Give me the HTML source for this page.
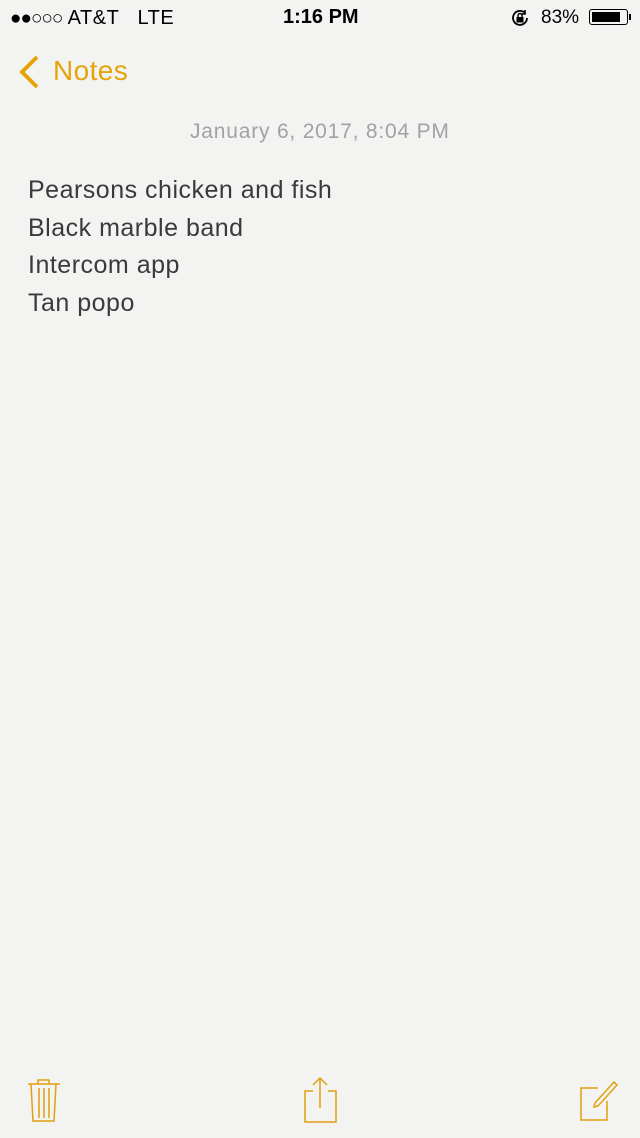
<!DOCTYPE html>
<html><head><meta charset="utf-8"><style>
html,body{margin:0;padding:0}
body{width:640px;height:1138px;background:#f3f3f2;position:relative;overflow:hidden;font-family:"Liberation Sans",Helvetica,Arial,sans-serif}
.a{position:absolute;white-space:nowrap}
</style></head><body>
<div class="a" style="left:10px;top:7px;font-size:19px;color:#000;">
<span style="letter-spacing:-1px">●●○○○</span> <span style="font-size:20px;letter-spacing:0.5px">AT&amp;T&nbsp;&nbsp; LTE</span></div>
<div class="a" style="left:283px;top:6px;font-size:20px;font-weight:bold;color:#000;">1:16 PM</div>
<svg class="a" style="left:510px;top:8px" width="20" height="20" viewBox="0 0 20 20"><path d="M17 10a7 7 0 1 1-2-5" fill="none" stroke="#000" stroke-width="1.8"/><path d="M15 2v4h-4" fill="none" stroke="#000" stroke-width="1.6"/><rect x="6.5" y="9" width="7" height="5.5" fill="#000"/><path d="M8 9V7.5a2 2 0 0 1 4 0V9" fill="none" stroke="#000" stroke-width="1.4"/></svg>
<div class="a" style="left:541px;top:7px;font-size:19px;color:#000;">83%</div>
<div class="a" style="left:589px;top:9px;width:39px;height:16px;border:1.5px solid #000;border-radius:3px;box-sizing:border-box;padding:2px"><div style="width:28px;height:100%;background:#000"></div></div>
<div class="a" style="left:629px;top:14px;width:2px;height:6px;background:#000"></div>
<svg class="a" style="left:16px;top:54px" width="26" height="36" viewBox="0 0 26 36"><path d="M21 3L6 18l15 15" fill="none" stroke="#e5a50a" stroke-width="4"/></svg>
<div class="a" style="left:53px;top:55px;font-size:28px;letter-spacing:0.4px;color:#e5a50a;">Notes</div>
<div class="a" style="left:190px;top:120px;font-size:21px;letter-spacing:0.8px;color:#a2a2a2;">January 6, 2017, 8:04 PM</div>
<div class="a" style="left:28px;top:172px;font-size:25px;letter-spacing:0.5px;line-height:37.7px;color:#3a3a3a;white-space:normal">Pearsons chicken and fish<br>Black marble band<br>Intercom app<br>Tan popo</div>
<svg class="a" style="left:26px;top:1078px" width="36" height="46" viewBox="0 0 36 46" fill="none" stroke="#e0a010" stroke-width="1.5"><path d="M2 6h32M12 6V2h11v4M5 6l2 37h21l2-37M13 10v30M18 10v30M23 10v30"/></svg>
<svg class="a" style="left:302px;top:1076px" width="36" height="48" viewBox="0 0 36 48" fill="none" stroke="#e0a010" stroke-width="1.5"><path d="M11 15H3v31h31V15h-8M18 32V2M11 9l7-7 7 7"/></svg>
<svg class="a" style="left:578px;top:1080px" width="40" height="42" viewBox="0 0 40 42" fill="none" stroke="#e0a010" stroke-width="1.5"><path d="M20 8H3v32h26V21"/><path d="M36 2l3 3-19 21-4 1 1-4z"/></svg>
</body></html>
